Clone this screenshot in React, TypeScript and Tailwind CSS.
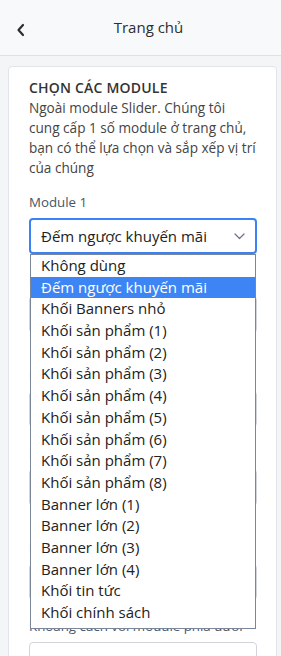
import { useState } from "react";

const options = [
  "Không dùng",
  "Đếm ngược khuyến mãi",
  "Khối Banners nhỏ",
  "Khối sản phẩm (1)",
  "Khối sản phẩm (2)",
  "Khối sản phẩm (3)",
  "Khối sản phẩm (4)",
  "Khối sản phẩm (5)",
  "Khối sản phẩm (6)",
  "Khối sản phẩm (7)",
  "Khối sản phẩm (8)",
  "Banner lớn (1)",
  "Banner lớn (2)",
  "Banner lớn (3)",
  "Banner lớn (4)",
  "Khối tin tức",
  "Khối chính sách",
];

function Chevron() {
  return (
    <svg width="11" height="7" viewBox="0 0 11 7" fill="none">
      <polyline
        points="1,1 5.5,5.5 10,1"
        stroke="#6b7280"
        strokeWidth="1.2"
        strokeLinecap="round"
        strokeLinejoin="round"
      />
    </svg>
  );
}

function ModuleGroup({
  index,
  value,
  open,
}: {
  index: number;
  value: string;
  open?: boolean;
}) {
  return (
    <div className="flex flex-col">
      <label className="text-[13.3px] leading-[20px] text-[#4b5563] mb-[6px]">
        Module {index}
      </label>
      <div className="relative">
        <div
          className={`h-[36px] flex items-center justify-between rounded-[4px] bg-white ${
            open
              ? "border-2 border-[#3b82f6] pl-[10px] pr-[10px]"
              : "border border-[#d1d5db] pl-[11px] pr-[11px]"
          }`}
        >
          <span className="text-[15px] text-[#222]">{value}</span>
          <Chevron />
        </div>
        {open && (
          <ul className="absolute left-[1px] right-[1px] top-[36px] z-10 bg-white border border-[#7a869a] pb-[4px]">
            {options.map((o) => (
              <li
                key={o}
                className={`h-[21.7px] leading-[21.7px] pl-[10px] text-[15px] ${
                  o === value ? "bg-[#3d85f5] text-white" : "text-[#222]"
                }`}
              >
                {o}
              </li>
            ))}
          </ul>
        )}
      </div>
      <label className="mt-[16px] text-[13.3px] leading-[20px] text-[#4b5563] mb-[6px]">
        Khoảng cách với module phía dưới
      </label>
      <div className="h-[37px] rounded-[4px] border border-[#d1d5db] bg-white" />
    </div>
  );
}

export default function App() {
  const [selected] = useState("Đếm ngược khuyến mãi");

  return (
    <main
      className="min-h-screen bg-[#f4f5f7] flex flex-col"
      style={{ fontFamily: '"Open Sans", "Noto Sans", sans-serif' }}
    >
      <header className="h-[56px] bg-[#f8f9fa] border-b border-[#dfe2e6] flex items-center pl-[16px]">
        <button className="absolute left-[12px] top-[19px] p-1">
          <svg width="10" height="14" viewBox="0 0 10 14" fill="none">
            <polyline
              points="7,2 2.5,7 7,12"
              stroke="#2b2f33"
              strokeWidth="2.2"
              strokeLinecap="round"
              strokeLinejoin="round"
            />
          </svg>
        </button>
        <h1 className="flex-1 text-center text-[15px] text-[#2b2f33] font-medium">
          Trang chủ
        </h1>
      </header>

      <div className="ml-2 mr-1 mt-[10px] bg-white border border-[#e1e4e8] rounded-[4px] pl-[20px] pr-[19px] pt-[11px] pb-6">
        <h2 className="text-[14px] leading-[20px] font-semibold text-[#333] tracking-[0.2px]">
          CHỌN CÁC MODULE
        </h2>
        <p className="text-[13.6px] leading-[20px] text-[#444]">
          Ngoài module Slider. Chúng tôi cung cấp 1 số module ở trang chủ, bạn
          có thể lựa chọn và sắp xếp vị trí của chúng
        </p>

        <div className="mt-[14px] flex flex-col gap-[32px]">
          <ModuleGroup index={1} value={selected} open />
          <ModuleGroup index={2} value="Khối Banners nhỏ" />
          <ModuleGroup index={3} value="Khối sản phẩm (1)" />
        </div>
      </div>
    </main>
  );
}
